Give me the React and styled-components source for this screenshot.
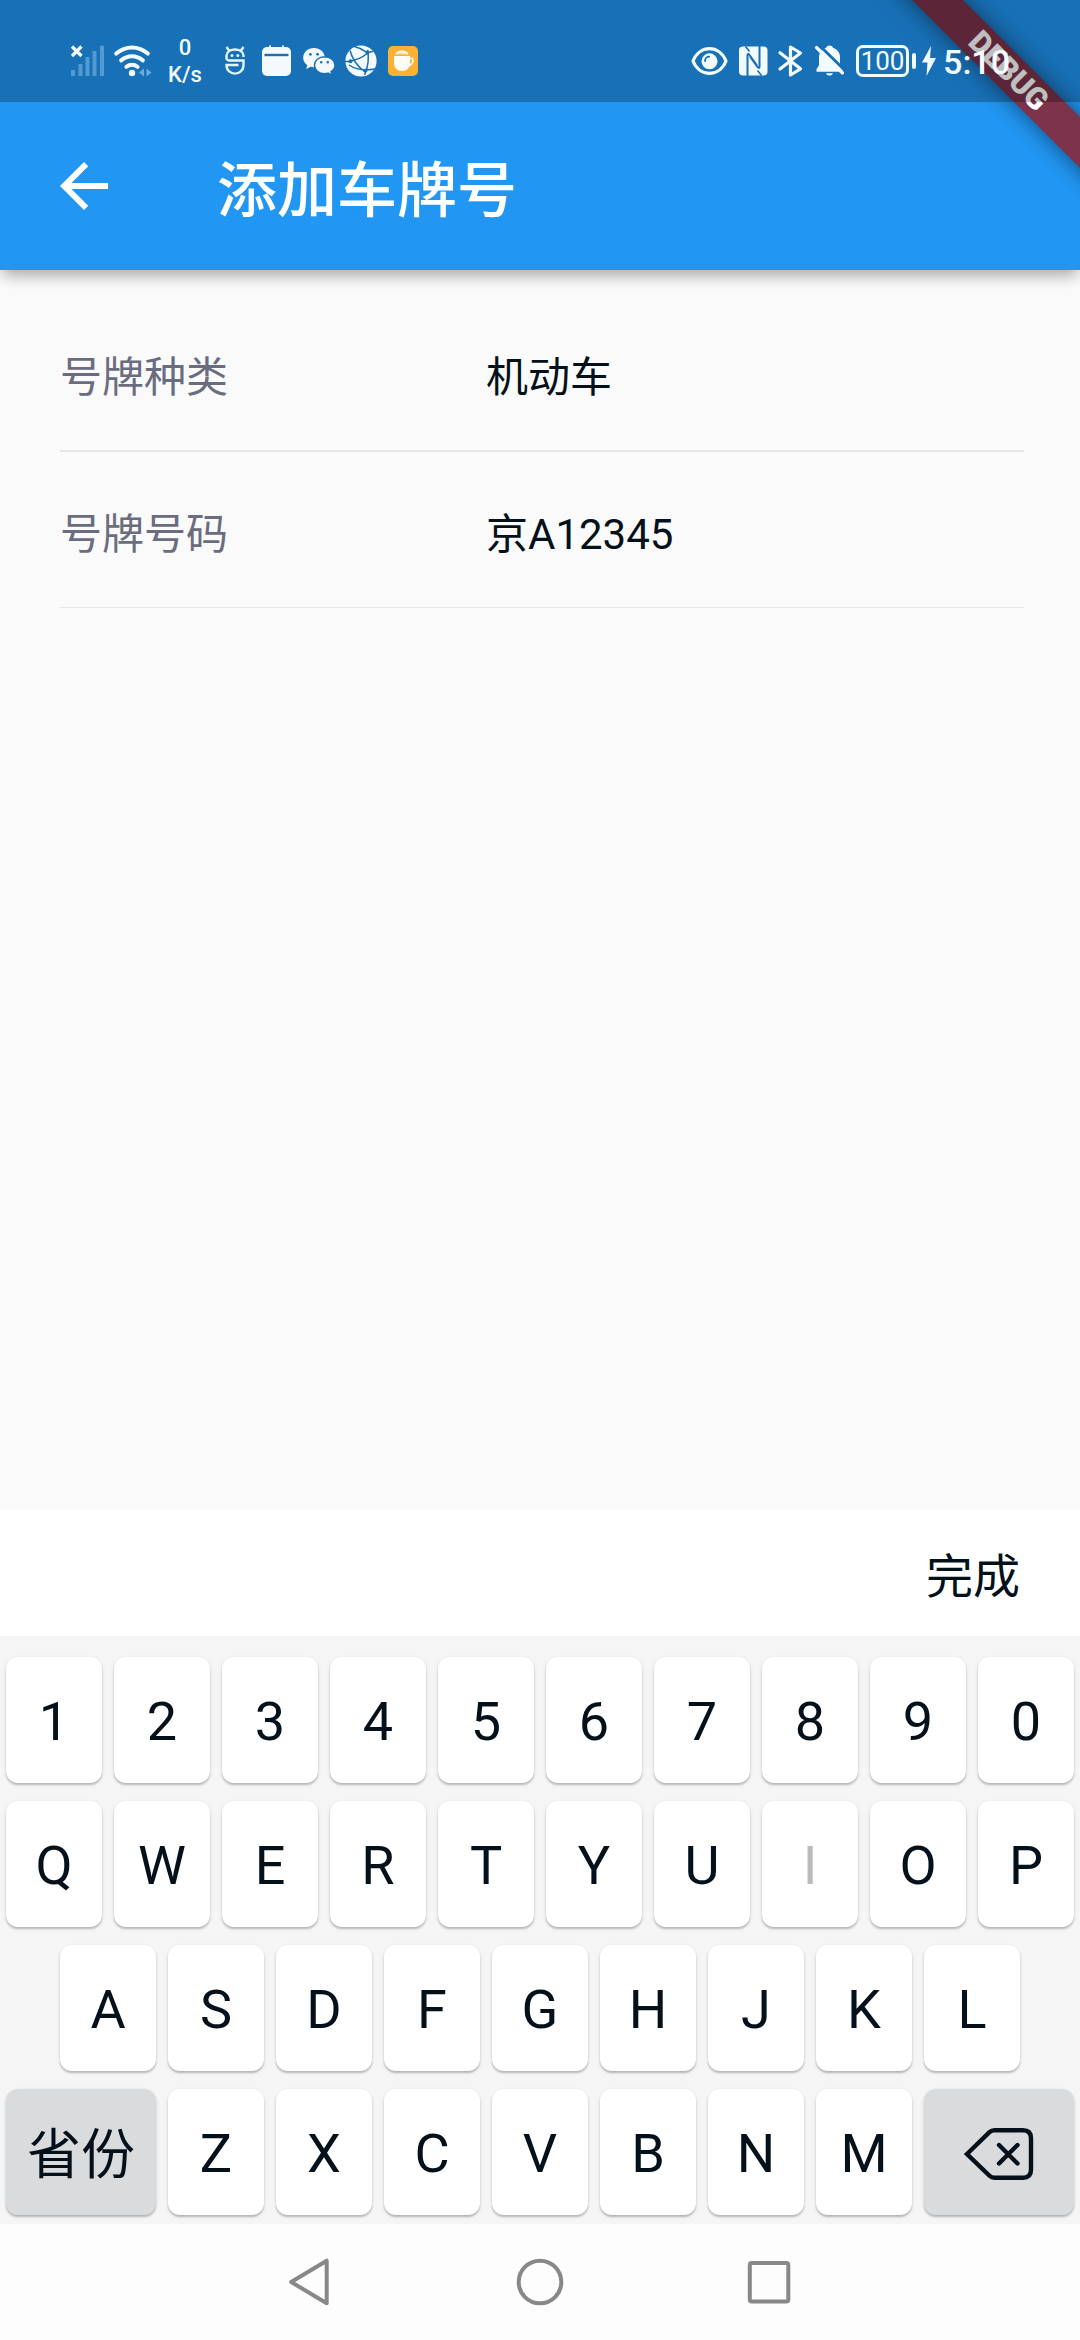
import React, { useState } from "react";
import styled, { createGlobalStyle } from "styled-components";

const GlobalStyle = createGlobalStyle`
  * {
    box-sizing: border-box;
  }
  body {
    margin: 0;
    background-color: #fafafa;
    font-family: Roboto, "Noto Sans CJK SC", sans-serif;
  }
`;

const Screen = styled.div`
  position: relative;
  display: flex;
  flex-direction: column;
  width: 1080px;
  height: 2340px;
  overflow: hidden;
  background-color: #fafafa;
  color: #04111a;
`;

/* ---------- app bar ---------- */

const AppBar = styled.header`
  display: flex;
  align-items: center;
  height: 270px;
  padding: 102px 60px 0;
  background-color: #2196f3;
  color: white;
  box-shadow: 0 9px 13px -3px rgba(0, 0, 0, 0.24),
    0 4px 18px -3px rgba(0, 0, 0, 0.14);

  h1 {
    margin: 0 0 0 109px;
    padding-top: 11px;
    font-size: 60px;
    font-weight: 500;
    line-height: 84px;
  }
`;

/* the banner and the dark strip both lie over the app bar */
const Banner = styled.div`
  position: absolute;
  top: 53px;
  left: 828px;
  width: 361px;
  height: 36px;
  transform: rotate(45deg);
  background-color: #7c334b;
  box-shadow: 0 0 22px rgba(0, 0, 0, 0.5);
  color: white;
  font-size: 30.6px;
  font-weight: 900;
  line-height: 36px;
  text-align: center;
`;

const StatusBar = styled.div`
  position: absolute;
  top: 0;
  left: 0;
  display: flex;
  align-items: center;
  justify-content: space-between;
  width: 100%;
  height: 102px;
  padding: 20px 70px 0 71px;
  background-color: rgba(0, 0, 0, 0.25);
  color: #f2fbff;
`;

const StatusGroup = styled.div`
  display: flex;
  align-items: center;
  gap: ${(props) => props.$gap}px;
  svg {
    display: block;
    flex: none;
    overflow: visible;
  }
`;

const Speed = styled.div`
  width: 36px;
  margin: 0 11px 0 4px;
  font-size: 22px;
  font-weight: 500;
  line-height: 27px;
  text-align: center;
`;

const Battery = styled.div`
  display: flex;
  align-items: center;
  gap: 3px;

  span {
    width: 53px;
    height: 32px;
    border: 3px solid #f2fbff;
    border-radius: 7px;
    font-size: 26px;
    line-height: 27px;
    text-align: center;
  }
  &::after {
    content: "";
    width: 4px;
    height: 16px;
    border-radius: 2px;
    background-color: #f2fbff;
  }
`;

const Clock = styled.div`
  margin: 2px 0 0 1px;
  font-size: 34px;
  font-weight: 500;
  line-height: 34px;
`;

/* ---------- form ---------- */

const Form = styled.main`
  flex: 1;
  padding: 30px 56px 0 60px;
`;

const Field = styled.div`
  display: flex;
  align-items: center;
  height: ${(props) => props.$height}px;
  padding-top: ${(props) => props.$top}px;
  border-bottom: ${(props) => props.$line}px solid #e6e6e6;
  font-size: 42px;
  line-height: 60px;

  label {
    width: 426px;
    color: #6a6d80;
  }
`;

/* ---------- keyboard ---------- */

const Toolbar = styled.div`
  display: flex;
  align-items: center;
  justify-content: flex-end;
  height: 127px;
  padding: 8px 60px 0;
  background-color: white;
  font-size: 47px;
  line-height: 66px;
`;

const Keyboard = styled.div`
  display: flex;
  flex-direction: column;
  gap: 18px;
  height: 588px;
  padding: 21px 6px 0;
  background-color: #f5f5f5;
`;

const KeyRow = styled.div`
  display: flex;
  justify-content: center;
  gap: 12px;
`;

const Key = styled.button`
  display: flex;
  align-items: center;
  justify-content: center;
  width: ${(props) => (props.$wide ? 150 : 96)}px;
  height: 126px;
  padding: 3px 0 0;
  border: none;
  border-radius: 12px;
  background-color: ${(props) => (props.$wide ? "#dadbdd" : "white")};
  box-shadow: 0 2px 2px rgba(0, 0, 0, 0.22), 0 1px 4px rgba(0, 0, 0, 0.08);
  color: #04111a;
  font-family: inherit;
  font-size: 54px;
  line-height: 64px;

  &:disabled {
    color: #bbb;
  }
  span {
    padding-top: 5px;
  }
`;

/* ---------- system navigation ---------- */

const NavBar = styled.nav`
  display: flex;
  align-items: center;
  justify-content: center;
  gap: 180px;
  height: 116px;
  background-color: #fdfdfd;
`;

const SignalIcon = () => (
  <svg width="32" height="32" viewBox="0 0 32 32">
    <path
      d="M0 25h4v6H0zM7.5 19h4v12h-4zM14.5 12h4v19h-4zM21.5 6h4v25h-4zM29 .7h4V31h-4z"
      fill="#8fc4ee"
      opacity=".5"
    />
    <path d="M1 1.5l9.500 9.500M10.500 1.500L1 11" stroke="#f2fbff" strokeWidth="3.2" />
  </svg>
);

const WifiIcon = () => (
  <svg width="38" height="32" viewBox="0 0 38 32" fill="none">
    <g stroke="#f2fbff" strokeWidth="4" strokeLinecap="round">
      <path d="M2.2 8.6C11.5.5 24.5.5 33.8 8.6" />
      <path d="M7.2 15.4c6.5-5.4 15.1-5.4 21.6 0" />
      <path d="M12.4 21.8c3.4-2.7 7.8-2.7 11.2 0" />
    </g>
    <circle cx="18" cy="28" r="3.2" fill="#f2fbff" />
    <path d="M30 23.5v8l-5-4zM32.5 23.5v8l5-4z" fill="#6fabdc" />
  </svg>
);

const RobotIcon = () => (
  <svg width="26" height="32" viewBox="0 0 26 32" fill="none">
    <path
      d="M18.5 12v-1.500C18 2.500 2 2.500 1.500 10.500v2.500a2.500 2.500 0 0 0 2.500 2.500h14.500V20C18.500 31.500 1.500 31.500 1.500 20h12M4 5.500L1.500 2M16 5.500L18.500 2"
      stroke="#e4f5ff"
      strokeWidth="2.4"
    />
    <circle cx="7" cy="10.500" r="1.500" fill="#e4f5ff" />
    <circle cx="12.800" cy="10.500" r="1.500" fill="#e4f5ff" />
  </svg>
);

const CalendarIcon = () => (
  <svg width="30" height="32" viewBox="0 0 30 32">
    <rect y="2" width="29" height="29" rx="5" fill="#f4f9fe" />
    <path d="M8 .5v3M21 .5v3" stroke="#f4f9fe" strokeWidth="2" />
    <path d="M2.5 10h24" stroke="#1a6fb4" strokeWidth="2.4" />
  </svg>
);

const ChatIcon = () => (
  <svg width="31" height="32" viewBox="0 0 31 32" fill="#f4f9fe">
    <path d="M11 3C4.9 3 .2 7.2.2 12.700c0 3.100 1.600 5.800 4.100 7.500L3.200 24l4.400-2.200c1.100.3 2.200.5 3.400.5 6 0 10.800-4.200 10.800-9.600S17 3 11 3z" />
    <path
      d="M21.500 11.800c-5.600 0-10 3.700-10 8.400s4.400 8.400 10 8.400c1.200 0 2.400-.2 3.500-.5l4 2-1-3.500c2.500-1.600 4-3.800 4-6.400 0-4.700-4.900-8.400-10.500-8.400z"
      stroke="#1a6fb4"
      strokeWidth="1.400"
    />
    <g fill="#1a6fb4">
      <circle cx="7.4" cy="9.3" r="1.4" />
      <circle cx="14.6" cy="9.3" r="1.4" />
      <circle cx="18.2" cy="17.3" r="1.2" />
      <circle cx="24.8" cy="17.3" r="1.2" />
    </g>
  </svg>
);

const SphereIcon = () => (
  <svg width="32" height="32" viewBox="0 0 32 32" fill="none">
    <circle cx="16" cy="16" r="15.600" fill="#f4f9fe" />
    <path
      d="M5 5.500C7 13 12 21 20 27M3.500 16.500C9 15.500 17 13 22 8.500M22.500 5C24 12 24 20 19.500 30M0 16.500l5 0M8 1c4 1 10 3.500 14 6.500l6-1M4 20c6 4 15 6 26 4"
      stroke="#1a6fb4"
      strokeWidth="1.500"
    />
    <g fill="#1a6fb4">
      <circle cx="5.5" cy="16.3" r="2" />
      <circle cx="22.5" cy="7.5" r="2" />
      <circle cx="20.5" cy="25.5" r="2" />
    </g>
  </svg>
);

const CupIcon = () => (
  <svg width="30" height="32" viewBox="0 0 30 32" fill="none">
    <rect y="1" width="30" height="30" rx="5" fill="#fcb034" />
    <path d="M6 11h16v7c0 4.500-3 8-8 8s-8-3.500-8-8z" fill="#fffdf5" />
    <path d="M8 9.500c1-4 10-4 12 0z" fill="#ffe0a0" />
    <path
      d="M21 13.500h3.500c1.500 3-.500 6.500-4.500 7.500M8 9c2-3.500 9-3.500 12 0"
      stroke="#fffdf5"
      strokeWidth="1.600"
    />
  </svg>
);

const EyeIcon = () => (
  <svg width="37" height="32" viewBox="0 0 37 32" fill="none">
    <path
      d="M2 16C8.500-.5 28.500-.5 35 16 28.500 32.500 8.500 32.500 2 16z"
      stroke="#f2fbff"
      strokeWidth="3.2"
      strokeLinejoin="round"
    />
    <circle cx="18.5" cy="16.3" r="8" fill="#f2fbff" />
    <path
      d="M14 16c0-2.500 1.800-4.300 4.200-4.300"
      stroke="#1a6fb4"
      strokeWidth="1.800"
      strokeLinecap="round"
    />
  </svg>
);

const NfcIcon = () => (
  <svg width="28" height="32" viewBox="0 0 28 32" fill="none">
    <rect y="1.5" width="28.5" height="29" rx="4" fill="#f2fbff" />
    <path
      d="M8.500 31V10.500c0-2 .8-2 2-.5L18 20.500M20.500 1v20.500c0 2-.8 2-2 .5L11 11.500"
      stroke="#1a6fb4"
      strokeWidth="2"
    />
    <path d="M6.500 1.500l4 5M22.500 30.500l-4-5" stroke="#1a6fb4" strokeWidth="1.600" />
  </svg>
);

const BluetoothIcon = () => (
  <svg width="26" height="32" viewBox="0 0 26 32" fill="none">
    <path
      d="M2 7.800l20.500 16L12.500 30V2l10 6L2 24"
      stroke="#f2fbff"
      strokeWidth="3.2"
      strokeLinecap="round"
      strokeLinejoin="round"
    />
  </svg>
);

const MuteIcon = () => (
  <svg width="30" height="32" viewBox="0 0 30 32" fill="none">
    <path
      d="M11 2.800c1-3 6-3 7 0 4.500 1.500 7 5 7 9.500v8l2.500 4v2.400H1.500v-2.400l2.500-4v-8c0-4.500 2.500-8 7-9.500zM11 28.200h7c-1 3.200-6 3.200-7 0z"
      fill="#f2fbff"
    />
    <path d="M4 0l26 25.500" stroke="#1a6fb4" strokeWidth="3" />
    <path d="M1.500 2.500l26 25.500" stroke="#f2fbff" strokeWidth="3.2" strokeLinecap="round" />
  </svg>
);

const BoltIcon = () => (
  <svg width="14" height="30" viewBox="0 0 14 30">
    <path d="M9 0L0 16.500h5.500L4.500 30 14 12H8z" fill="#f2fbff" />
  </svg>
);

const BackArrow = () => (
  <svg width="48" height="48" viewBox="0 0 16 16" fill="white">
    <path d="M16 7H3.830l5.590-5.590L8 0 0 8l8 8 1.410-1.410L3.830 9H16V7z" />
  </svg>
);

const DeleteIcon = () => (
  <svg width="70" height="52" viewBox="0 0 70 52" fill="none" stroke="#04111a">
    <path
      d="M3 26L25.500 4.200q2-2 5-2H59q8 0 8 8v31.600q0 8-8 8H30.500q-3 0-5-2z"
      strokeWidth="4.4"
    />
    <path d="M35 17l18.500 18.500M53.500 17L35 35.500" strokeWidth="4.4" strokeLinecap="round" />
  </svg>
);

const rows = ["1234567890", "QWERTYUIOP", "ASDFGHJKL", "ZXCVBNM"];

const App = () => {
  const [plate, setPlate] = useState("京A12345");

  const press = (char) => {
    if (plate.length < 8) setPlate(plate + char);
  };

  return (
    <>
      <GlobalStyle />
      <Screen>
        <AppBar>
          <BackArrow />
          <h1>添加车牌号</h1>
        </AppBar>
        <Banner>DEBUG</Banner>
        <StatusBar>
          <StatusGroup $gap={11}>
            <SignalIcon />
            <WifiIcon />
            <Speed>
              0<br />
              K/s
            </Speed>
            <RobotIcon />
            <CalendarIcon />
            <ChatIcon />
            <SphereIcon />
            <CupIcon />
          </StatusGroup>
          <StatusGroup $gap={11}>
            <EyeIcon />
            <NfcIcon />
            <BluetoothIcon />
            <MuteIcon />
            <StatusGroup $gap={6}>
              <Battery>
                <span>100</span>
              </Battery>
              <BoltIcon />
              <Clock>5:10</Clock>
            </StatusGroup>
          </StatusGroup>
        </StatusBar>

        <Form>
          <Field $height={152} $top={5} $line={2}>
            <label>号牌种类</label>
            <span>机动车</span>
          </Field>
          <Field $height={156} $top={10} $line={1}>
            <label>号牌号码</label>
            <span>{plate}</span>
          </Field>
        </Form>

        <Toolbar>完成</Toolbar>
        <Keyboard>
          {rows.map((row, i) => (
            <KeyRow key={row}>
              {i === 3 && (
                <Key $wide>
                  <span>省份</span>
                </Key>
              )}
              {row.split("").map((char) => (
                <Key
                  key={char}
                  disabled={char === "I"}
                  onClick={() => press(char)}
                >
                  {char}
                </Key>
              ))}
              {i === 3 && (
                <Key $wide onClick={() => setPlate(plate.slice(0, -1))}>
                  <DeleteIcon />
                </Key>
              )}
            </KeyRow>
          ))}
        </Keyboard>

        <NavBar>
          <svg width="48" height="52" viewBox="0 0 48 52" fill="none">
            <path
              d="M38.700 4.700v42.600L3.200 26z"
              stroke="#888"
              strokeWidth="4"
              strokeLinejoin="round"
            />
          </svg>
          <svg width="48" height="48" viewBox="0 0 48 48" fill="none">
            <circle cx="24" cy="24" r="21.300" stroke="#888" strokeWidth="4" />
          </svg>
          <svg width="48" height="48" viewBox="0 0 48 48" fill="none">
            <rect x="5.800" y="4.900" width="38.500" height="38.500" rx="2" stroke="#888" strokeWidth="4" />
          </svg>
        </NavBar>
      </Screen>
    </>
  );
};

export default App;
